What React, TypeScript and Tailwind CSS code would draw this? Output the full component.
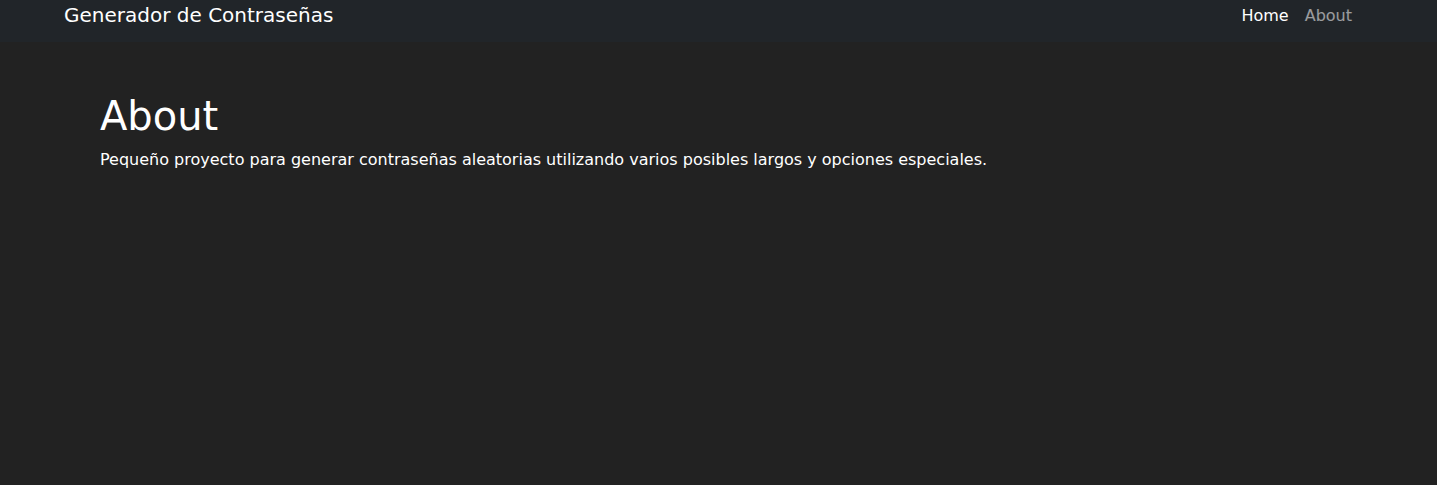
import React from 'react';

const App: React.FC = () => {
    return (
        <div className="min-h-screen w-full bg-[#222222] font-['DejaVu_Sans',sans-serif] text-white">
            <nav className="h-[42px] bg-[#212529] flex items-start justify-between pl-[64px] pr-[77px]">
                <span className="text-[20px] leading-[30px] text-white">Generador de Contraseñas</span>
                <div className="flex pt-[4px]">
                    <a className="px-2 text-[16px] leading-6 text-white">Home</a>
                    <a className="px-2 text-[16px] leading-6 text-white/55">About</a>
                </div>
            </nav>
            <main className="pl-[100px] pt-[50px]">
                <h1 className="text-[40px] leading-[48px] mb-2">About</h1>
                <p className="text-[16px] leading-6">
                    Pequeño proyecto para generar contraseñas aleatorias utilizando varios posibles largos y opciones especiales.
                </p>
            </main>
        </div>
    );
};

export default App;
